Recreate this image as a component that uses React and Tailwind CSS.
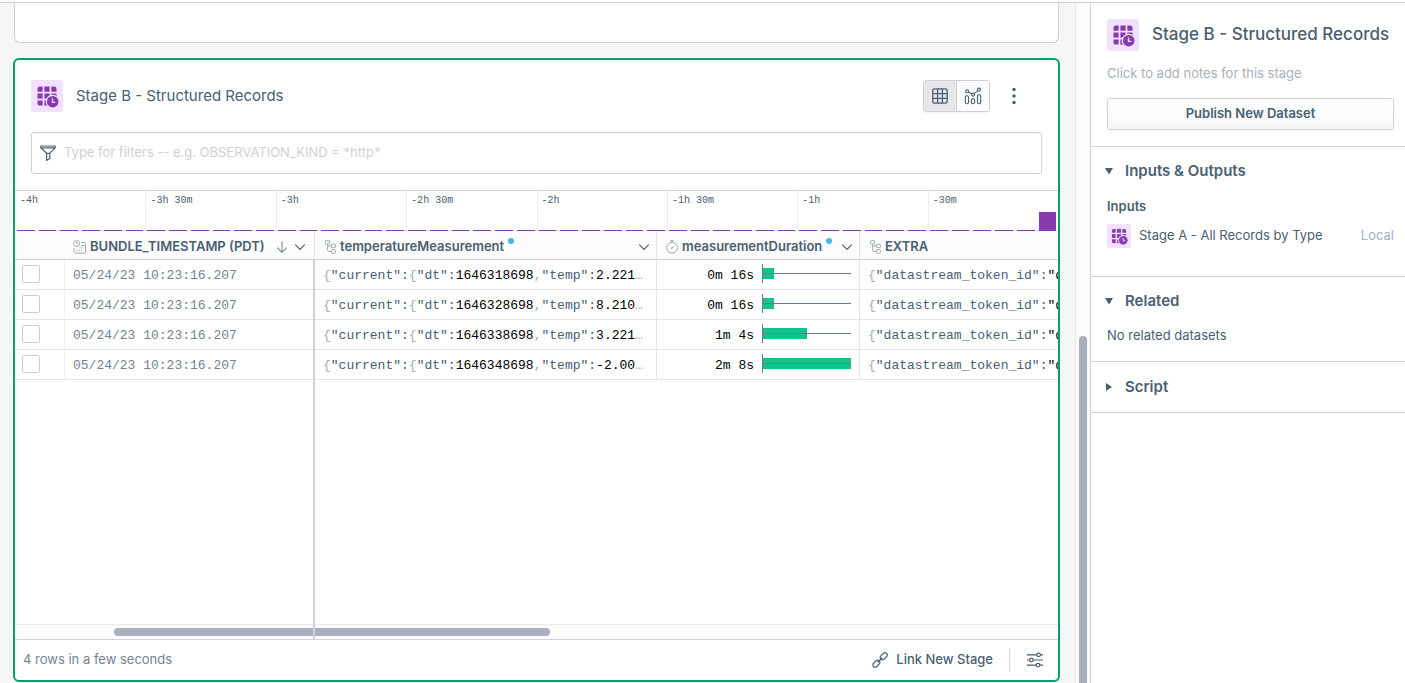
import React, { useState } from "react";

const ticks = ["-4h", "-3h 30m", "-3h", "-2h 30m", "-2h", "-1h 30m", "-1h", "-30m"];

const buckets = Array.from({ length: 48 }, (_, i) => (i === 47 ? 19 : 1));

const rows = [
  { id: 1, time: "05/24/23 10:23:16.207", dt: "1646318698", temp: "2.221", duration: "0m 16s", seconds: 16 },
  { id: 2, time: "05/24/23 10:23:16.207", dt: "1646328698", temp: "8.210", duration: "0m 16s", seconds: 16 },
  { id: 3, time: "05/24/23 10:23:16.207", dt: "1646338698", temp: "3.221", duration: "1m 4s", seconds: 64 },
  { id: 4, time: "05/24/23 10:23:16.207", dt: "1646348698", temp: "-2.00", duration: "2m 8s", seconds: 128 },
];

const MAX_SECONDS = 128;

function StageIcon({ className }) {
  return (
    <svg viewBox="0 0 32 32" className={className} aria-hidden="true">
      <rect width="32" height="32" rx="3" fill="#f3e0fc" />
      <g fill="#863bb0">
        <path d="M9 6.5h2.6v5.2H6.5V9A2.5 2.5 0 0 1 9 6.5z" />
        <rect x="13.4" y="6.5" width="5.2" height="5.2" />
        <path d="M20.4 6.5H23A2.5 2.5 0 0 1 25.5 9v2.7h-5.1z" />
        <rect x="6.5" y="13.5" width="5.1" height="5.1" />
        <rect x="13.4" y="13.5" width="5.2" height="5.1" />
        <rect x="20.4" y="13.5" width="5.1" height="5.1" />
        <path d="M6.5 20.4h5.1v5.2H9A2.5 2.5 0 0 1 6.5 23z" />
        <rect x="13.4" y="20.4" width="5.2" height="5.2" />
      </g>
      <circle cx="21.7" cy="21.7" r="7" fill="#f3e0fc" />
      <circle cx="21.7" cy="21.7" r="5.8" fill="#863bb0" />
      <path d="M21.5 18.6v3.7h2.8" fill="none" stroke="#f3e0fc" strokeWidth="1.3" />
    </svg>
  );
}

function GridIcon() {
  return (
    <svg width="16" height="16" viewBox="0 0 16 16" fill="none" stroke="currentColor" strokeWidth="1.3" aria-hidden="true">
      <rect x=".8" y=".8" width="14.4" height="14.4" rx="1.8" />
      <path d="M5.6 1v14M10.4 1v14M1 5.6h14M1 10.4h14" />
    </svg>
  );
}

function ChartIcon() {
  return (
    <svg width="18" height="18" viewBox="0 0 18 18" fill="none" stroke="currentColor" strokeWidth="1.1" aria-hidden="true">
      <rect x="1.3" y="8.7" width="3.2" height="8" rx="1.4" />
      <rect x="7.4" y="11.7" width="3.2" height="5" rx="1.4" />
      <rect x="13.5" y="7.7" width="3.2" height="9" rx="1.4" />
      <circle cx="3.1" cy="4.3" r="1.5" />
      <circle cx="9" cy="7.6" r="1.5" />
      <circle cx="15" cy="2.6" r="1.5" />
      <path d="M4.5 5l3.1 1.8M10.2 6.6l3.7-3" />
    </svg>
  );
}

function FunnelIcon() {
  return (
    <svg width="16" height="16" viewBox="0 0 16 16" fill="none" stroke="#4a6072" strokeWidth="1.2" strokeLinejoin="round" aria-hidden="true">
      <path d="M.8 1h14.4v1.8L9.8 8.2v5.3l-3.2 2V8.2L.8 2.8zM1 2.9h14M6.6 8.3h3.2" />
    </svg>
  );
}

function TimeIcon() {
  return (
    <svg width="13" height="14" viewBox="0 0 13 14" fill="none" stroke="#a3abb6" aria-hidden="true">
      <circle cx="3.6" cy="3.6" r="3" />
      <path d="M3.6 1.8v2h1.2M8 2.5h3.2a1.3 1.3 0 0 1 1.3 1.3v8a1.3 1.3 0 0 1-1.3 1.3H2.3A1.3 1.3 0 0 1 1 11.8V8M8 5.5h4.5" />
      <path d="M6.5 7.8h4.5M3 10.3h6" strokeDasharray="1.3 1.2" />
    </svg>
  );
}

function TreeIcon() {
  return (
    <svg width="11" height="14" viewBox="0 0 11 14" fill="none" stroke="#a3abb6" aria-hidden="true">
      <rect x=".6" y=".6" width="4" height="3.4" rx=".6" />
      <rect x="6.4" y="4.3" width="4" height="3.4" rx=".6" />
      <rect x="6.4" y="9.8" width="4" height="3.4" rx=".6" />
      <path d="M2.6 4v6.5a1 1 0 0 0 1 1h2.8M2.6 6h3.8" />
    </svg>
  );
}

function TimerIcon() {
  return (
    <svg width="12" height="14" viewBox="0 0 12 14" fill="none" stroke="#a3abb6" aria-hidden="true">
      <circle cx="6" cy="7.8" r="5.4" />
      <path d="M4.3.6h3.4M6 .6v1.8M10.3 2.6l1 1M5.8 8.2l2.4-2.6" />
      <circle cx="5.8" cy="8.1" r=".5" />
    </svg>
  );
}

function ChevronIcon() {
  return (
    <svg width="12" height="8" viewBox="0 0 12 8" fill="none" stroke="currentColor" strokeWidth="1.2" aria-hidden="true">
      <path d="M1.3 1.6L6 6.3l4.7-4.7" />
    </svg>
  );
}

function SortIcon() {
  return (
    <svg width="12" height="12" viewBox="0 0 12 12" fill="none" stroke="#7b8896" strokeWidth="1.1" aria-hidden="true">
      <path d="M6 .5v10.7M1.3 6.6L6 11.3l4.7-4.7" />
    </svg>
  );
}

function LinkIcon() {
  return (
    <svg width="16" height="16" viewBox="0 0 16 16" fill="none" stroke="currentColor" strokeWidth="1.2" aria-hidden="true">
      <g transform="rotate(-45 8 8)">
        <rect x="-1.2" y="5.7" width="8" height="4.6" rx="2.3" />
        <rect x="9.2" y="5.7" width="8" height="4.6" rx="2.3" />
        <path d="M4.5 8h7" />
      </g>
    </svg>
  );
}

function SettingsIcon() {
  return (
    <svg width="18" height="16" viewBox="0 0 18 16" fill="none" stroke="currentColor" strokeWidth="1.2" aria-hidden="true">
      <path d="M1 2.8h9.8M14.4 2.8H17M1 8h2.6M7.2 8H17M1 13.2h9.2M13.8 13.2H17" />
      <circle cx="12.6" cy="2.8" r="1.8" />
      <circle cx="5.4" cy="8" r="1.8" />
      <circle cx="12" cy="13.2" r="1.8" />
    </svg>
  );
}

function DurationBar({ seconds }) {
  return (
    <svg width="89" height="19" viewBox="0 0 89 19" className="mb-[6px] shrink-0" aria-hidden="true">
      <rect x="1" y="4" width={Math.floor((seconds / MAX_SECONDS) * 88)} height="11" fill="#12c48b" />
      <rect x="0" y="9" width="89" height="1" fill="#6b7b8c" />
      <rect x="0" y="0" width="1" height="19" fill="#6b7b8c" />
    </svg>
  );
}

function Timeline() {
  return (
    <div className="grid h-[41px] border-t border-[#d0d3da]">
      <div className="col-start-1 row-start-1 grid grid-cols-8 border-b border-[#dde0e4] font-['Liberation_Mono',monospace] text-[10px] leading-5 text-[#4a6072]">
        {ticks.map((tick) => (
          <div key={tick} className="border-l border-[#edf0f2] pl-1 first:border-l-0 first:pl-[5px]">
            {tick}
          </div>
        ))}
      </div>
      <div className="col-start-1 row-start-1 flex items-end">
        {buckets.map((height, i) => (
          <div key={i} className="flex-1 px-[2px]">
            <div className="bg-[#863bb0]" style={{ height }} />
          </div>
        ))}
      </div>
    </div>
  );
}

function HeaderCell({ icon, label, modified, sorted, menu, className }) {
  return (
    <th className={`h-[29px] overflow-hidden border-b border-[#cdd1d7] bg-[#fcfcfc] p-0 pt-[3px] text-left text-[13px] font-semibold ${className}`}>
      <div className="flex h-5 items-center whitespace-nowrap">
        {icon}
        <span className="ml-1">{label}</span>
        {modified && <span className="mb-3 ml-1 size-[6px] rounded-full bg-[#4cb5e8]" />}
        {sorted && <span className="ml-auto"><SortIcon /></span>}
        {menu && (
          <button type="button" aria-label={`${label} menu`} className={sorted ? "mx-[6px]" : "mr-[6px] ml-auto"}>
            <ChevronIcon />
          </button>
        )}
      </div>
    </th>
  );
}

function ResultsTable() {
  const cell = "h-[30px] overflow-hidden border-b border-[#e4e6ea] p-0 whitespace-pre";
  return (
    <div className="relative flex flex-1 flex-col overflow-hidden">
      <div className="flex-1 overflow-hidden">
        <table className="w-full table-fixed border-separate border-spacing-0">
          <colgroup>
            <col className="w-[50px]" />
            <col className="w-[250px]" />
            <col className="w-[342px]" />
            <col className="w-[203px]" />
            <col />
          </colgroup>
          <thead>
            <tr>
              <th aria-label="Select" className="border-b border-[#cdd1d7] bg-[#fcfcfc] p-0" />
              <HeaderCell className="border-r border-r-[#e4e6ea] pr-[2px] pl-2" icon={<TimeIcon />} label="BUNDLE_TIMESTAMP (PDT)" sorted menu />
              <HeaderCell className="border-r border-r-[#e4e6ea] pl-[10px]" icon={<TreeIcon />} label="temperatureMeasurement" modified menu />
              <HeaderCell className="border-r border-r-[#e4e6ea] pl-[9px]" icon={<TimerIcon />} label="measurementDuration" modified menu />
              <HeaderCell className="pl-[10px]" icon={<TreeIcon />} label="EXTRA" />
            </tr>
          </thead>
          <tbody className="font-['Liberation_Mono',monospace] text-[13px] text-[#4a6072]">
            {rows.map((row) => (
              <tr key={row.id}>
                <td className={`${cell} border-r border-r-[#edf0f2] pb-[2px]`}>
                  <input
                    type="checkbox"
                    aria-label={`Select row ${row.id}`}
                    className="ml-[7px] block size-[18px] appearance-none rounded-[2px] border border-[#c9cdd4] bg-white checked:bg-[#089f6c]"
                  />
                </td>
                <td className={`${cell} pt-[3px] pl-2 text-[#76828f]`}>{row.time}</td>
                <td className={`${cell} border-r border-r-[#e4e6ea] pt-[3px] pl-2`}>
                  <span className="text-[#a3abb6]">{"{"}</span>"current":
                  <span className="text-[#a3abb6]">{"{"}</span>"dt":
                  <span className="text-black">{row.dt}</span>
                  <span className="text-[#a3abb6]">,</span>"temp":
                  <span className="text-black">{row.temp}</span>
                  <span className="text-[#a3abb6]">…</span>
                </td>
                <td className={`${cell} border-r border-r-[#e4e6ea] pt-[3px] pr-2 text-black`}>
                  <div className="flex items-center justify-end gap-2">
                    {row.duration}
                    <DurationBar seconds={row.seconds} />
                  </div>
                </td>
                <td className={`${cell} pt-[3px] pl-2`}>
                  <span className="text-[#a3abb6]">{"{"}</span>"datastream_token_id":
                  <span className="text-black">"d</span>
                </td>
              </tr>
            ))}
          </tbody>
        </table>
      </div>
      <div className="flex h-4 items-center border-y border-t-[#e8eaec] border-b-[#d0d3da] bg-[#fcfcfc]">
        <div className="ml-[99px] h-2 w-[436px] rounded-full bg-[#a9b0bd]" />
      </div>
      {/* frozen column divider */}
      <div className="absolute top-[29px] bottom-0 left-[298px] w-[2px] bg-[#cfd3d9]" />
    </div>
  );
}

function StageCard() {
  const [view, setView] = useState("table");
  return (
    <section className="mt-[15px] flex flex-1 flex-col overflow-hidden rounded-md border-2 border-[#089f6c] bg-white">
      <div className="flex items-center px-4 pt-5">
        <StageIcon className="size-8" />
        <h2 className="ml-[13px] text-[15px]">Stage B - Structured Records</h2>
        <div className="ml-auto flex h-8 overflow-hidden rounded-[3px] border border-[#cdd1d7] shadow-xs">
          <button
            type="button"
            aria-label="Table view"
            aria-pressed={view === "table"}
            onClick={() => setView("table")}
            className={`flex w-8 items-center justify-center ${view === "table" ? "bg-[#e5e7eb]" : "bg-[#fafbfb]"}`}
          >
            <GridIcon />
          </button>
          <button
            type="button"
            aria-label="Chart view"
            aria-pressed={view === "chart"}
            onClick={() => setView("chart")}
            className={`flex w-[33px] items-center justify-center border-l border-[#cdd1d7] ${view === "chart" ? "bg-[#e5e7eb]" : "bg-[#fafbfb]"}`}
          >
            <ChartIcon />
          </button>
        </div>
        <button type="button" aria-label="Stage options" className="mr-4 ml-3 p-1">
          <svg width="16" height="18" viewBox="0 0 16 18" fill="currentColor" aria-hidden="true">
            <circle cx="8" cy="2.5" r="1.7" />
            <circle cx="8" cy="9" r="1.7" />
            <circle cx="8" cy="15.5" r="1.7" />
          </svg>
        </button>
      </div>
      <label className="mx-4 mt-5 mb-4 flex h-[42px] items-center gap-2 rounded-[3px] border border-[#cdd1d7] px-2 inset-shadow-2xs">
        <FunnelIcon />
        <input
          type="text"
          aria-label="Filters"
          placeholder="Type for filters -- e.g. OBSERVATION_KIND = *http*"
          className="flex-1 text-[13px] outline-none placeholder:text-[#cdd1d9]"
        />
      </label>
      <Timeline />
      <ResultsTable />
      <div className="flex h-10 items-center pr-[14px] pl-2 text-[13px]">
        <span className="text-[#76828f]">4 rows in a few seconds</span>
        <button type="button" className="mr-4 ml-auto flex items-center gap-2 font-medium">
          <LinkIcon />
          Link New Stage
        </button>
        <button type="button" aria-label="Stage settings" className="border-l border-[#cdd1d7] py-1 pl-4">
          <SettingsIcon />
        </button>
      </div>
    </section>
  );
}

function SectionTitle({ open, children }) {
  return (
    <button type="button" aria-expanded={open} className="-ml-[2px] flex items-center text-[15px] leading-6 font-semibold">
      <svg width="8" height="8" viewBox="0 0 8 8" fill="currentColor" className="mr-3" aria-hidden="true">
        {open ? <path d="M0 1h8L4 7.5z" /> : <path d="M1 0v8l6-4z" />}
      </svg>
      {children}
    </button>
  );
}

function Sidebar() {
  return (
    <aside className="w-[315px] shrink-0 border-l border-[#cdd1dc] bg-white text-[13px]">
      <div className="border-b border-[#d0d3da] px-4 pt-4 pb-4">
        <div className="flex items-center">
          <StageIcon className="size-8 shrink-0" />
          <h1 className="ml-[13px] text-[17px] font-medium whitespace-nowrap">Stage B - Structured Records</h1>
        </div>
        <p className="mt-3 leading-5 text-[#a9b0bd]">Click to add notes for this stage</p>
        <button
          type="button"
          className="mt-[15px] h-8 w-[287px] rounded-[3px] border border-[#cdd1d7] bg-linear-to-b from-white to-[#f5f7f6] font-semibold shadow-xs"
        >
          Publish New Dataset
        </button>
      </div>
      <div className="border-b border-[#d0d3da] pt-3 pr-[11px] pb-7 pl-4">
        <SectionTitle open>Inputs &amp; Outputs</SectionTitle>
        <h3 className="mt-[13px] leading-5 font-semibold">Inputs</h3>
        <div className="mt-2 flex items-center">
          <StageIcon className="size-6" />
          <a href="#stage-a" className="ml-2">Stage A - All Records by Type</a>
          <span className="ml-auto text-[#a9b0bd]">Local</span>
        </div>
      </div>
      <div className="border-b border-[#d0d3da] px-4 pt-3 pb-4">
        <SectionTitle open>Related</SectionTitle>
        <p className="mt-3 leading-5">No related datasets</p>
      </div>
      <div className="border-b border-[#d0d3da] px-4 py-[13px]">
        <SectionTitle open={false}>Script</SectionTitle>
      </div>
    </aside>
  );
}

export default function App() {
  return (
    <div className="flex h-screen flex-col overflow-hidden bg-white font-['Inter',sans-serif] text-[#4a6072]">
      <div className="h-[3px] shrink-0 border-b border-[#cdd1dc]" />
      <div className="flex min-h-0 flex-1">
        <main className="flex min-w-0 flex-1 flex-col bg-[#f5f7f6] pr-[15px] pb-px pl-[13px]">
          <div className="mx-px h-10 shrink-0 rounded-b-md border border-t-0 border-[#cdd1d7] bg-white" />
          <StageCard />
        </main>
        <div className="flex w-[15px] shrink-0 flex-col items-center justify-end border-l border-[#e6e8ea] bg-[#fcfcfc]">
          <div className="h-[51%] w-2 rounded-t-full bg-[#a9b0bd]" />
        </div>
        <Sidebar />
      </div>
    </div>
  );
}
